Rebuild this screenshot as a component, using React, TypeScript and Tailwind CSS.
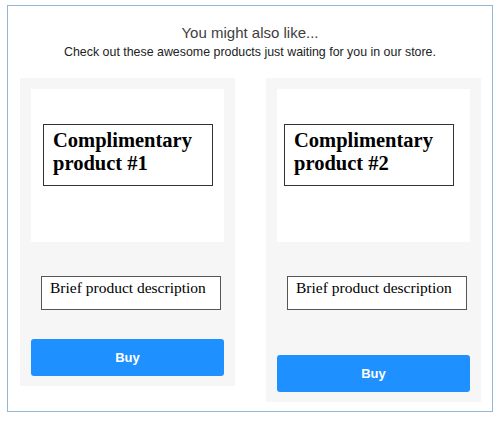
const products = [
  { name: "Complimentary product #1", titleMl: "ml-[12px]", buyMt: "mt-[29px]" },
  { name: "Complimentary product #2", titleMl: "ml-[7px]", buyMt: "mt-[45px]" },
];

function ProductCard({ name, titleMl, buyMt }: { name: string; titleMl: string; buyMt: string }) {
  return (
    <div className="w-[215px] bg-[#f6f6f6] px-[11px] pt-[11px] pb-[10px]">
      <div className="h-[153px] bg-white pt-[35px]">
        <div
          className={`${titleMl} h-[62px] w-[170px] border border-[#333] pl-[9px] pt-[4px] text-[20.5px] leading-[23px] font-bold text-black`}
          style={{ fontFamily: '"Liberation Serif", serif' }}
        >
          {name}
        </div>
      </div>
      <div
        className="mt-[34px] ml-[10px] h-[34px] w-[180px] border border-[#555] bg-white pl-[8px] pt-[2px] text-[15.5px] leading-[18px] text-black"
        style={{ fontFamily: '"Liberation Serif", serif' }}
      >
        Brief product description
      </div>
      <button
        type="button"
        className={`${buyMt} flex h-[37px] w-full items-center justify-center rounded-[3px] bg-[#1e90ff] text-[13px] font-bold text-white`}
      >
        Buy
      </button>
    </div>
  );
}

export default function App() {
  return (
    <div className="h-[421px] w-[500px] bg-white pl-[7px] pt-[5px]" style={{ fontFamily: '"Liberation Sans", Arial, sans-serif' }}>
      <div className="h-[407px] w-[486px] border border-[#94b6d4]">
        <div className="pt-[18px] text-center text-[15px] leading-[18px] text-[#404040]">
          You might also like...
        </div>
        <div className="mt-[3px] text-center text-[12.4px] leading-[15px] text-[#222]">
          Check out these awesome products just waiting for you in our store.
        </div>
        <div className="mt-[18px] flex items-start gap-[31px] pl-[12px]">
          {products.map((p) => (
            <ProductCard key={p.name} {...p} />
          ))}
        </div>
      </div>
    </div>
  );
}
